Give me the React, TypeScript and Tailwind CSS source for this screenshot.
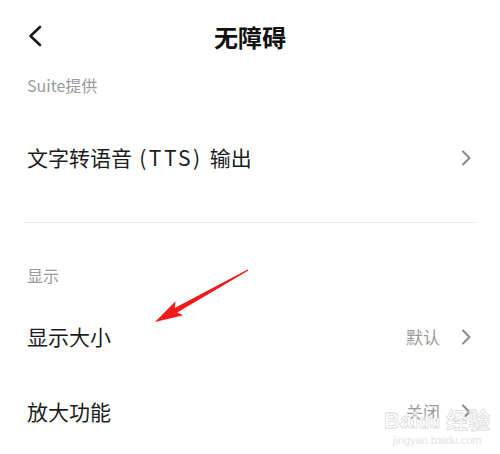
import React from 'react';

const font = { fontFamily: '"Noto Sans CJK SC", "Noto Sans", sans-serif' };

function ChevronRight() {
  return (
    <svg width="10" height="16" viewBox="0 0 10 16" className="shrink-0">
      <path d="M2 1.5 L8.5 8 L2 14.5" fill="none" stroke="#8a8a8a" strokeWidth="2" strokeLinecap="round" strokeLinejoin="round" />
    </svg>
  );
}

function SectionLabel({ text }: { text: string }) {
  return <div className="h-[24px] flex items-center px-[27px] text-[16px] text-[#9a9a9a]">{text}</div>;
}

function Row({ title, value }: { title: React.ReactNode; value?: string }) {
  return (
    <div className="h-[75px] flex items-center pl-[27px] pr-[29px]">
      <div className="flex-1 text-[21px] text-[#1c1c1c]">{title}</div>
      {value ? <div className="text-[17px] text-[#9a9a9a] mr-[21px]">{value}</div> : null}
      <ChevronRight />
    </div>
  );
}

export default function App() {
  return (
    <div className="relative w-[500px] h-[454px] bg-white overflow-hidden" style={font}>
      {/* Header */}
      <div className="relative h-[73px] flex items-center justify-center">
        <svg width="16" height="22" viewBox="0 0 16 22" className="absolute left-[27px] top-[25px]">
          <path d="M13 2 L3.5 11 L13 20" fill="none" stroke="#1a1a1a" strokeWidth="2.6" strokeLinecap="round" strokeLinejoin="round" />
        </svg>
        <div className="text-[24px] font-semibold text-[#111] mt-[1px]">无障碍</div>
      </div>

      <SectionLabel text="Suite提供" />
      <div className="mt-[23px]">
        <Row
          title={
            <>
              文字转语音<span className="tracking-[2.5px]"> (TTS) </span>输出
            </>
          }
        />
      </div>
      <div className="mt-[27px] mx-[24px] h-px bg-[#ececec]" />

      <div className="mt-[40px]">
        <SectionLabel text="显示" />
      </div>
      <div className="mt-[12px]">
        <Row title="显示大小" value="默认" />
        <Row title="放大功能" value="关闭" />
      </div>

      {/* Red annotation arrow */}
      <svg className="absolute left-0 top-0 pointer-events-none" width="500" height="454">
        <polygon
          points="248.4,270.6 177.2,312.5 183.3,315.3 155,322 175.5,301.3 174.7,308.1 247.6,269.4"
          fill="#f2191b"
        />
      </svg>

      {/* Watermark */}
      <div className="absolute left-[384px] top-[410px] text-center leading-none pointer-events-none" style={{ fontFamily: '"Liberation Sans", "Noto Sans CJK SC", sans-serif' }}>
        <div className="text-[22px] font-bold text-white" style={{ WebkitTextStroke: '0.8px #dcdcdc' }}>Bai<span className="text-[18px]">du</span> 经验</div>
        <div className="text-[11px] text-[#e2e2e2] mt-[3px]">jingyan.baidu.com</div>
      </div>
    </div>
  );
}
